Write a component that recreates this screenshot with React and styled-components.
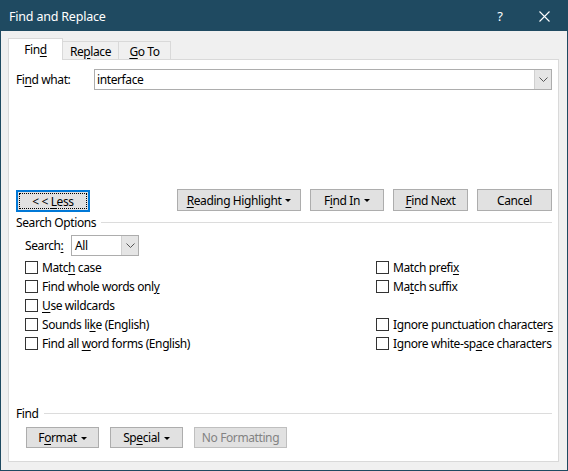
import React from 'react'
import styled, { createGlobalStyle } from 'styled-components'

const GlobalStyle = createGlobalStyle`
    html, body {
        margin: 0;
        padding: 0;
        background: #ffffff;
    }
    * {
        box-sizing: border-box;
    }
`

const FONT = `"Noto Sans", "Open Sans", sans-serif`

const Window = styled.div`
    width: 568px;
    height: 471px;
    border: 1px solid #1f4a61;
    border-top: none;
    display: flex;
    flex-direction: column;
    font-family: ${FONT};
    font-size: 12px;
    letter-spacing: -0.4px;
    white-space: nowrap;
    color: #000;
    background: #f0f0f0;
`

const TitleBar = styled.div`
    height: 31px;
    background: #1f4a61;
    color: #fff;
    display: flex;
    align-items: center;
    padding-left: 8px;
    padding-top: 1px;
    font-size: 12.5px;
    letter-spacing: -0.2px;
    flex-shrink: 0;
`

const Title = styled.div`
    flex: 1;
`

const TitleBtn = styled.div`
    width: 46px;
    height: 30px;
    display: flex;
    align-items: center;
    justify-content: center;
    font-size: 13px;
    padding-left: ${p => p.pl || 0}px;
`

const Body = styled.div`
    flex: 1;
    display: flex;
    flex-direction: column;
    padding: 7px 8px 8px 7px;
`

const TabRow = styled.div`
    display: flex;
    align-items: flex-end;
    height: 21px;
`

const Tab = styled.div`
    position: relative;
    height: ${p => (p.active ? '22px' : '18px')};
    margin-bottom: ${p => (p.active ? '-1px' : '0')};
    margin-left: ${p => (p.first ? '0' : '-1px')};
    width: ${p => p.w}px;
    border: 1px solid #d9d9d9;
    border-bottom: none;
    background: ${p => (p.active ? '#fff' : '#f0f0f0')};
    z-index: ${p => (p.active ? 2 : 1)};
    display: flex;
    align-items: center;
    justify-content: center;
    padding-top: ${p => (p.active ? '0' : '1px')};
`

const Panel = styled.div`
    flex: 1;
    background: #fff;
    border: 1px solid #d9d9d9;
    display: flex;
    flex-direction: column;
    padding: 9px 6px 13px 7px;
`

const FieldRow = styled.div`
    display: flex;
    align-items: center;
`

const Label = styled.div`
    width: ${p => p.w || 'auto'};
    flex-shrink: 0;
`

const Combo = styled.div`
    height: ${p => p.h || 21}px;
    width: ${p => (p.w ? `${p.w}px` : 'auto')};
    flex: ${p => (p.w ? 'none' : '1')};
    border: 1px solid #adadad;
    display: flex;
    background: #fff;
`

const ComboText = styled.div`
    flex: 1;
    padding-left: ${p => p.pad || 2}px;
    display: flex;
    align-items: center;
`

const ComboArrow = styled.div`
    width: 17px;
    background: #e5e5e5;
    border-left: 1px solid #d0d0d0;
    display: flex;
    align-items: center;
    justify-content: center;
`

const ButtonRow = styled.div`
    display: flex;
    align-items: flex-start;
    margin-top: ${p => p.mt || 0}px;
    margin-left: ${p => p.ml || 0}px;
    gap: ${p => p.gap || 9}px;
`

const Button = styled.div`
    position: relative;
    height: ${p => p.h || 22}px;
    width: ${p => p.w}px;
    margin-top: ${p => p.mt || 0}px;
    margin-left: ${p => (p.push ? 'auto' : '0')};
    background: #e1e1e1;
    border: ${p => (p.focus ? '2px solid #0078d7' : p.disabled ? '1px solid #bfbfbf' : '1px solid #adadad')};
    color: ${p => (p.disabled ? '#838383' : '#000')};
    display: flex;
    align-items: center;
    justify-content: center;
    gap: 4px;
    ${p => p.focus && `
        &::after {
            content: '';
            position: absolute;
            inset: 1px;
            border: 1px dotted #000;
        }
    `}
`

const Caret = styled.span`
    width: 0;
    height: 0;
    border-left: 3px solid transparent;
    border-right: 3px solid transparent;
    border-top: 3px solid #000;
    margin-top: 1px;
`

const GroupHeader = styled.div`
    display: flex;
    align-items: center;
    height: 14px;
    margin-top: ${p => p.mt || 0}px;
    gap: 5px;
`

const Rule = styled.div`
    flex: 1;
    height: 1px;
    background: #dcdcdc;
`

const SearchRow = styled.div`
    display: flex;
    align-items: center;
    margin: 6px 0 0 9px;
`

const Options = styled.div`
    display: grid;
    grid-template-columns: 351px 1fr;
    grid-auto-rows: 19px;
    margin: 2px 0 0 9px;
`

const Check = styled.div`
    display: flex;
    align-items: center;
    gap: 4px;
`

const Box = styled.span`
    width: 13px;
    height: 13px;
    border: 1px solid #333;
    background: #fff;
    flex-shrink: 0;
`

const Bottom = styled.div`
    margin-top: auto;
    display: flex;
    flex-direction: column;
`

const Key = styled.span`
    text-decoration: underline;
    text-underline-offset: 2px;
`

const Chevron = () => (
    <svg width="9" height="6" viewBox="0 0 9 6">
        <polyline points="0.5,0.5 4.5,4.5 8.5,0.5" fill="none" stroke="#555" strokeWidth="1" />
    </svg>
)

const CloseIcon = () => (
    <svg width="11" height="11" viewBox="0 0 11 11">
        <path d="M0.5 0.5 L10.5 10.5 M10.5 0.5 L0.5 10.5" stroke="#fff" strokeWidth="1.1" />
    </svg>
)

const CheckItem = ({ children }) => (
    <Check>
        <Box />
        <span>{children}</span>
    </Check>
)

const App = () => {
    return (
        <>
            <GlobalStyle />
            <Window>
                <TitleBar>
                    <Title>Find and Replace</Title>
                    <TitleBtn pl={4}>?</TitleBtn>
                    <TitleBtn>
                        <CloseIcon />
                    </TitleBtn>
                </TitleBar>
                <Body>
                    <TabRow>
                        <Tab active first w={55}><span>Fin<Key>d</Key></span></Tab>
                        <Tab w={57}><span>Re<Key>p</Key>lace</span></Tab>
                        <Tab w={53}><span><Key>G</Key>o To</span></Tab>
                    </TabRow>
                    <Panel>
                        <FieldRow>
                            <Label w="78px">Fi<Key>n</Key>d what:</Label>
                            <Combo>
                                <ComboText>interface</ComboText>
                                <ComboArrow><Chevron /></ComboArrow>
                            </Combo>
                        </FieldRow>

                        <ButtonRow mt={99}>
                            <Button focus w={74} mt={1} h={22}><span>&lt; &lt; <Key>L</Key>ess</span></Button>
                            <Button push w={124}><span><Key>R</Key>eading Highlight</span><Caret /></Button>
                            <Button w={74}><span>F<Key>i</Key>nd In</span><Caret /></Button>
                            <Button w={75}><span><Key>F</Key>ind Next</span></Button>
                            <Button w={75}><span>Cancel</span></Button>
                        </ButtonRow>

                        <GroupHeader mt={3}>
                            <span>Search Options</span>
                            <Rule />
                        </GroupHeader>

                        <SearchRow>
                            <Label w="46px">Search<Key>:</Key></Label>
                            <Combo w={68}>
                                <ComboText pad={3}>All</ComboText>
                                <ComboArrow><Chevron /></ComboArrow>
                            </Combo>
                        </SearchRow>

                        <Options>
                            <CheckItem>Matc<Key>h</Key> case</CheckItem>
                            <CheckItem>Match prefi<Key>x</Key></CheckItem>
                            <CheckItem>Find whole words onl<Key>y</Key></CheckItem>
                            <CheckItem>Ma<Key>t</Key>ch suffix</CheckItem>
                            <CheckItem><Key>U</Key>se wildcards</CheckItem>
                            <div />
                            <CheckItem>Sounds li<Key>k</Key>e (English)</CheckItem>
                            <CheckItem>Ignore punctuation character<Key>s</Key></CheckItem>
                            <CheckItem>Find all <Key>w</Key>ord forms (English)</CheckItem>
                            <CheckItem>Ignore white-sp<Key>a</Key>ce characters</CheckItem>
                        </Options>

                        <Bottom>
                            <GroupHeader>
                                <span>Find</span>
                                <Rule />
                            </GroupHeader>
                            <ButtonRow mt={7} ml={10} gap={11}>
                                <Button w={73} h={21}><span>F<Key>o</Key>rmat</span><Caret /></Button>
                                <Button w={73} h={21}><span>Sp<Key>e</Key>cial</span><Caret /></Button>
                                <Button w={93} h={21} disabled><span>No Formatting</span></Button>
                            </ButtonRow>
                        </Bottom>
                    </Panel>
                </Body>
            </Window>
        </>
    )
}

export default App
